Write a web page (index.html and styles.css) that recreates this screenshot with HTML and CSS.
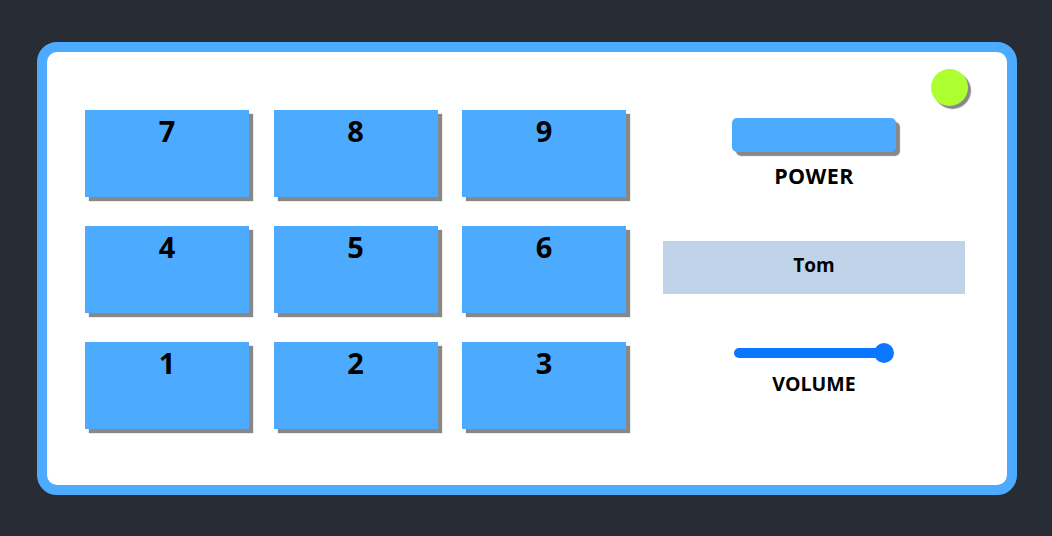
FILE: index.html
```html
<!DOCTYPE html>
<html>
<head>
<meta charset="utf-8">
<link rel="stylesheet" href="styles.css">
</head>
<body>
<div class="panel">
  <span class="led"></span>
  <div class="keypad">
    <div class="key">7</div>
    <div class="key">8</div>
    <div class="key">9</div>
    <div class="key">4</div>
    <div class="key">5</div>
    <div class="key">6</div>
    <div class="key">1</div>
    <div class="key">2</div>
    <div class="key">3</div>
  </div>
  <div class="controls">
    <div class="power-btn"></div>
    <div class="label power-label">POWER</div>
    <div class="display">Tom</div>
    <div class="slider"><span class="track"></span><span class="thumb"></span></div>
    <div class="label volume-label">VOLUME</div>
  </div>
</div>
</body>
</html>
```
FILE: styles.css
```css
html, body {
  margin: 0;
  padding: 0;
  background: #282c34;
  font-family: "Open Sans", "Noto Sans", sans-serif;
}
body {
  width: 1052px;
  height: 536px;
  overflow: hidden;
}
.panel {
  position: relative;
  box-sizing: border-box;
  width: 980px;
  height: 453px;
  margin: 42px 0 0 37px;
  border: 10px solid #4dabff;
  border-radius: 20px;
  background: #fff;
  display: flex;
  padding: 58px 0 0 38px;
}
.led {
  position: absolute;
  top: 17px;
  right: 39px;
  width: 37px;
  height: 37px;
  border-radius: 50%;
  background: #adff2f;
  box-shadow: 3px 3px 1px #888;
}
.keypad {
  display: grid;
  grid-template-columns: repeat(3, 164px);
  grid-auto-rows: 87px;
  column-gap: 24.5px;
  row-gap: 29px;
  align-content: start;
}
.key {
  background: #4dabff;
  box-shadow: 4px 4px 1px #888;
  text-align: center;
  font-weight: 700;
  font-size: 29px;
  line-height: 42px;
  color: #000;
}
.controls {
  margin-left: 37px;
  width: 302px;
  display: flex;
  flex-direction: column;
  align-items: center;
}
.power-btn {
  margin-top: 8px;
  width: 164px;
  height: 34px;
  background: #4dabff;
  border-radius: 5px;
  box-shadow: 4px 4px 1px #888;
}
.label {
  font-weight: 700;
  color: #000;
}
.power-label {
  margin-top: 9px;
  font-size: 21.5px;
  letter-spacing: 0.4px;
}
.display {
  margin-top: 51px;
  width: 302px;
  height: 53px;
  box-sizing: border-box;
  padding-bottom: 5px;
  background: #bfd4e8;
  display: flex;
  align-items: center;
  justify-content: center;
  font-weight: 700;
  font-size: 19px;
}
.slider {
  margin-top: 49px;
  width: 160px;
  height: 20px;
  display: flex;
  align-items: center;
}
.track {
  width: 150px;
  height: 10px;
  border-radius: 5px;
  background: #0b76ff;
}
.thumb {
  width: 20px;
  height: 20px;
  margin-left: -10px;
  border-radius: 50%;
  background: #0b76ff;
}
.volume-label {
  margin-top: 7px;
  font-size: 19.5px;
}
```
